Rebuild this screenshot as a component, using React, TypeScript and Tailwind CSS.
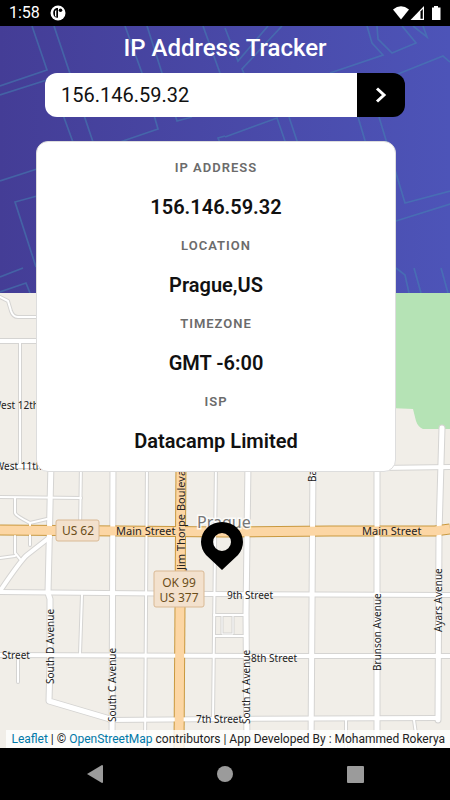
import React, { useState } from 'react';

interface Detail {
  label: string;
  value: string;
}

interface Road {
  d: string;
  width: number;
}

interface StreetLabel {
  text: string;
  x: number;
  y: number;
  vertical?: boolean;
  major?: boolean;
}

const details: Detail[] = [
  { label: 'IP Address', value: '156.146.59.32' },
  { label: 'Location', value: 'Prague,US' },
  { label: 'Timezone', value: 'GMT -6:00' },
  { label: 'ISP', value: 'Datacamp Limited' },
];

const patternLines = [
  'M32 0 47 44 0 60',
  'M0 69 50 53 74 119',
  'M54 0 94 119',
  'M125 0 142 47 158 103 120 116',
  'M147 0 162 47 177 95 192 91',
  'M203 0 220 47',
  'M225 110 218 112 221 119',
  'M225 2 238 35 268 0',
  'M282 0 242 43 246 52',
  'M367 0 372 17 383 29 330 47',
  'M377 0 378 13 392 27 416 17 402 0',
  'M413 0 427 11 423 0',
  'M398 48 443 30 450 36',
  'M225 111 277 92 286 118',
  'M289 91 298 118',
  'M358 91 366 118',
  'M379 91 405 177 450 165',
  'M396 195 450 178',
  'M0 155 37 143',
  'M37 170 15 176 36 241',
  'M0 251 23 242',
  'M0 266 26 257 30 267',
  'M396 242 405 249 409 267',
  'M414 242 421 267',
  'M441 242 448 267',
];

// map coordinates start at the top left corner of the map area
const roads: Road[] = [
  { d: 'M0 4 8 8 11 18Q13 24 18 24H60', width: 2 },
  { d: 'M0 48H60', width: 4 },
  { d: 'M20 48V173', width: 2 },
  { d: 'M0 173H60', width: 4 },
  { d: 'M380 175 450 174', width: 4 },
  { d: 'M0 204 81 205', width: 2 },
  { d: 'M15 205V220Q16 223 30 230L47 226', width: 2 },
  { d: 'M30 230V252', width: 2 },
  { d: 'M15 243V260L20 266M0 265 15 263', width: 2 },
  { d: 'M50 244 27 262Q21 267 0 298', width: 4 },
  { d: 'M51 170 48 300 50 306V370L49 408 110 426', width: 5 },
  { d: 'M81 170 80 240M82 302 80 361', width: 2 },
  { d: 'M113 170 112 455', width: 5 },
  { d: 'M147 170 145 455', width: 2 },
  { d: 'M216 170 213 426', width: 2 },
  { d: 'M248 170 246 320 247 455', width: 5 },
  { d: 'M313 170 311 455', width: 5 },
  { d: 'M377 170V455', width: 5 },
  { d: 'M442 135 439 240 438 427', width: 5 },
  { d: 'M0 299 210 301 450 302', width: 4 },
  { d: 'M0 362 260 363 450 363', width: 4 },
  { d: 'M110 427 225 426 437 425', width: 4 },
  { d: 'M214 322H246M214 343H246', width: 2 },
  { d: 'M222 323V341H233V323', width: 1 },
  { d: 'M18 367V389', width: 2 },
  { d: 'M346 427V455M414 427 418 455M47 444V450', width: 2 },
];

const highways = ['M0 237 120 238 225 239 330 238 435 238 450 236', 'M181 170 179 455'];

const streetLabels: StreetLabel[] = [
  { text: 'West 12th', x: -8, y: 116 },
  { text: 'West 11th', x: -5, y: 177 },
  { text: 'Main Street', x: 116, y: 242, major: true },
  { text: 'Main Street', x: 362, y: 242, major: true },
  { text: '9th Street', x: 227, y: 306 },
  { text: '8th Street', x: 251, y: 369 },
  { text: '7th Street', x: 196, y: 430 },
  { text: 'Street', x: 2, y: 366 },
  { text: 'Jim Thorpe Boulevard', x: 185, y: 277, vertical: true, major: true },
  { text: 'South D Avenue', x: 54, y: 391, vertical: true },
  { text: 'South C Avenue', x: 116, y: 429, vertical: true },
  { text: 'South A Avenue', x: 250, y: 431, vertical: true },
  { text: 'Brunson Avenue', x: 381, y: 378, vertical: true },
  { text: 'Ayars Avenue', x: 442, y: 339, vertical: true },
  { text: 'Barta Avenue', x: 316, y: 189, vertical: true },
];

const StatusBar: React.FC = () => (
  <div className="flex h-[26px] shrink-0 items-center justify-between bg-black pr-2 pl-[9px] text-white">
    <div className="flex items-center gap-[10px]">
      <span className="text-base">1:58</span>
      <svg className="size-4" viewBox="0 0 16 16" aria-hidden="true">
        <circle cx="8" cy="8" r="7.5" fill="white" />
        <path d="M6.5 3H8V12.8Q3.2 12.5 3.2 8 3.2 4 6.5 3Z" fill="black" />
        <path d="M5 6V11L6.3 12V5Z" fill="white" />
        <circle cx="10.5" cy="5.3" r="1.8" fill="black" />
      </svg>
    </div>
    <div className="flex items-center">
      <svg className="h-4 w-[50px]" viewBox="0 0 50 16" aria-hidden="true">
        <path d="M1 4.5Q9 -2 17 4.5L9 14.5Z" fill="white" />
        <path d="M18.5 15 32 1V15Z" fill="white" />
        <path d="M28.5 6.5 30.8 4V13.8H28.5Z" fill="black" />
        <path d="M40 2.5H42V1H46V2.5H48.5V15H40Z" fill="white" />
      </svg>
    </div>
  </div>
);

const HeroPattern: React.FC = () => (
  <svg
    className="absolute inset-0 size-full"
    viewBox="0 0 450 267"
    preserveAspectRatio="xMidYMid slice"
    aria-hidden="true"
  >
    <g fill="none" stroke="#4488b4" strokeOpacity="0.5" strokeWidth="1.7">
      {patternLines.map((d) => (
        <path key={d} d={d} />
      ))}
    </g>
  </svg>
);

const StreetMap: React.FC = () => (
  <svg
    className="absolute inset-0 size-full font-['Noto_Sans',sans-serif]"
    viewBox="0 0 450 455"
    preserveAspectRatio="xMidYMid slice"
    role="img"
    aria-label="Map"
  >
    <rect width="450" height="455" fill="#f1eee8" />
    <path d="M390 0H450V136L423 136Q418 134 416 128L413 116 390 115Z" fill="#b5e3b5" />
    <g fill="none" stroke="#d5d4d2" strokeLinecap="round" strokeLinejoin="round">
      {roads.map((road) => (
        <path key={road.d} d={road.d} strokeWidth={road.width + 2} />
      ))}
    </g>
    <g fill="none" stroke="#c9993f" strokeWidth="11">
      {highways.map((d) => (
        <path key={d} d={d} />
      ))}
    </g>
    <g fill="none" stroke="#ffffff" strokeLinecap="round" strokeLinejoin="round">
      {roads.map((road) => (
        <path key={road.d} d={road.d} strokeWidth={road.width} />
      ))}
    </g>
    <g fill="none" stroke="#fcd6a4" strokeWidth="9">
      {highways.map((d) => (
        <path key={d} d={d} />
      ))}
    </g>
    <g fill="#222222">
      {streetLabels.map(({ text, x, y, vertical, major }) => (
        <text
          key={`${text}-${x}`}
          fontSize={major ? 11 : 10}
          transform={vertical ? `translate(${x} ${y}) rotate(-90)` : `translate(${x} ${y})`}
        >
          {text}
        </text>
      ))}
    </g>
    <text x="197" y="235" fontSize="16" fill="#777777" stroke="#ffffff" strokeWidth="3" strokeOpacity="0.8" paintOrder="stroke">
      Prague
    </text>
    <g fill="#f3e1cd" stroke="#d9b994">
      <rect x="56" y="227" width="43" height="21" rx="2" />
      <rect x="154" y="278" width="50" height="36" rx="2" />
    </g>
    <g fontSize="12" fill="#6b4e1a" textAnchor="middle">
      <text x="78" y="242">US 62</text>
      <text x="179" y="294">OK 99</text>
      <text x="179" y="309">US 377</text>
    </g>
    <path
      d="M222 229A21 20 0 0 1 243 249Q243 256 238 262L222 277 206 262Q201 256 201 249A21 20 0 0 1 222 229ZM222 240A9 9 0 1 0 222 258A9 9 0 1 0 222 240Z"
      fill="black"
      fillRule="evenodd"
    />
  </svg>
);

const NavigationBar: React.FC = () => (
  <nav className="grid h-[52px] shrink-0 grid-cols-3 items-center bg-black px-[30px] text-[#9b9b9b]">
    <button type="button" aria-label="Back" className="justify-self-center">
      <svg className="h-[18px] w-4" viewBox="0 0 16 18" fill="currentColor">
        <path d="M15 0Q16 0 16 1V17Q16 18 15 18L0 9Z" />
      </svg>
    </button>
    <button type="button" aria-label="Home" className="size-4 justify-self-center rounded-full bg-current" />
    <button type="button" aria-label="Recent apps" className="size-[17px] justify-self-center rounded-[1px] bg-current" />
  </nav>
);

export default function App() {
  const [ip, setIp] = useState('156.146.59.32');

  return (
    <div className="flex min-h-screen flex-col bg-black font-[Roboto,sans-serif]">
      <StatusBar />

      <header className="relative z-10 h-[267px] bg-linear-to-r from-[#443d96] to-[#4d54b8]">
        <HeroPattern />
        <div className="relative">
          <h1 className="pt-1 pb-[7px] text-center text-2xl leading-9 font-medium text-white">IP Address Tracker</h1>
          <form className="mx-auto flex h-11 w-4/5" onSubmit={(e) => e.preventDefault()}>
            <input
              type="text"
              aria-label="IP address"
              value={ip}
              onChange={(e) => setIp(e.target.value)}
              className="min-w-0 flex-1 rounded-l-xl bg-white px-4 text-xl text-[#111111] outline-none"
            />
            <button
              type="submit"
              aria-label="Search"
              className="flex w-12 items-center justify-center rounded-r-xl bg-black"
            >
              <svg className="h-4 w-3" viewBox="0 0 12 16" fill="none" stroke="white" strokeWidth="3">
                <path d="M2 1.5 9 8 2 14.5" />
              </svg>
            </button>
          </form>

          <dl className="mt-6 ml-[8%] flex w-4/5 flex-col gap-[15px] rounded-xl border border-[#dddddd] bg-white py-4 text-center">
            {details.map((detail) => (
              <div key={detail.label} className="flex flex-col gap-[15px]">
                <dt className="text-[13px] leading-5 font-semibold tracking-[1px] text-[#6b6b6b] uppercase">
                  {detail.label}
                </dt>
                <dd className="text-xl leading-7 font-semibold text-[#111111]">{detail.value}</dd>
              </div>
            ))}
          </dl>
        </div>
      </header>

      <main className="relative flex-1 overflow-hidden">
        <StreetMap />
        <p className="absolute right-0 bottom-0 bg-white/80 px-[5px] text-xs leading-[18px] whitespace-nowrap text-[#222222]">
          <a href="https://leafletjs.com" className="text-[#0078a8]">Leaflet</a>
          {' | © '}
          <a href="https://www.openstreetmap.org/copyright" className="text-[#0078a8]">OpenStreetMap</a>
          {' contributors | App Developed By : Mohammed Rokerya'}
        </p>
      </main>

      <NavigationBar />
    </div>
  );
}
